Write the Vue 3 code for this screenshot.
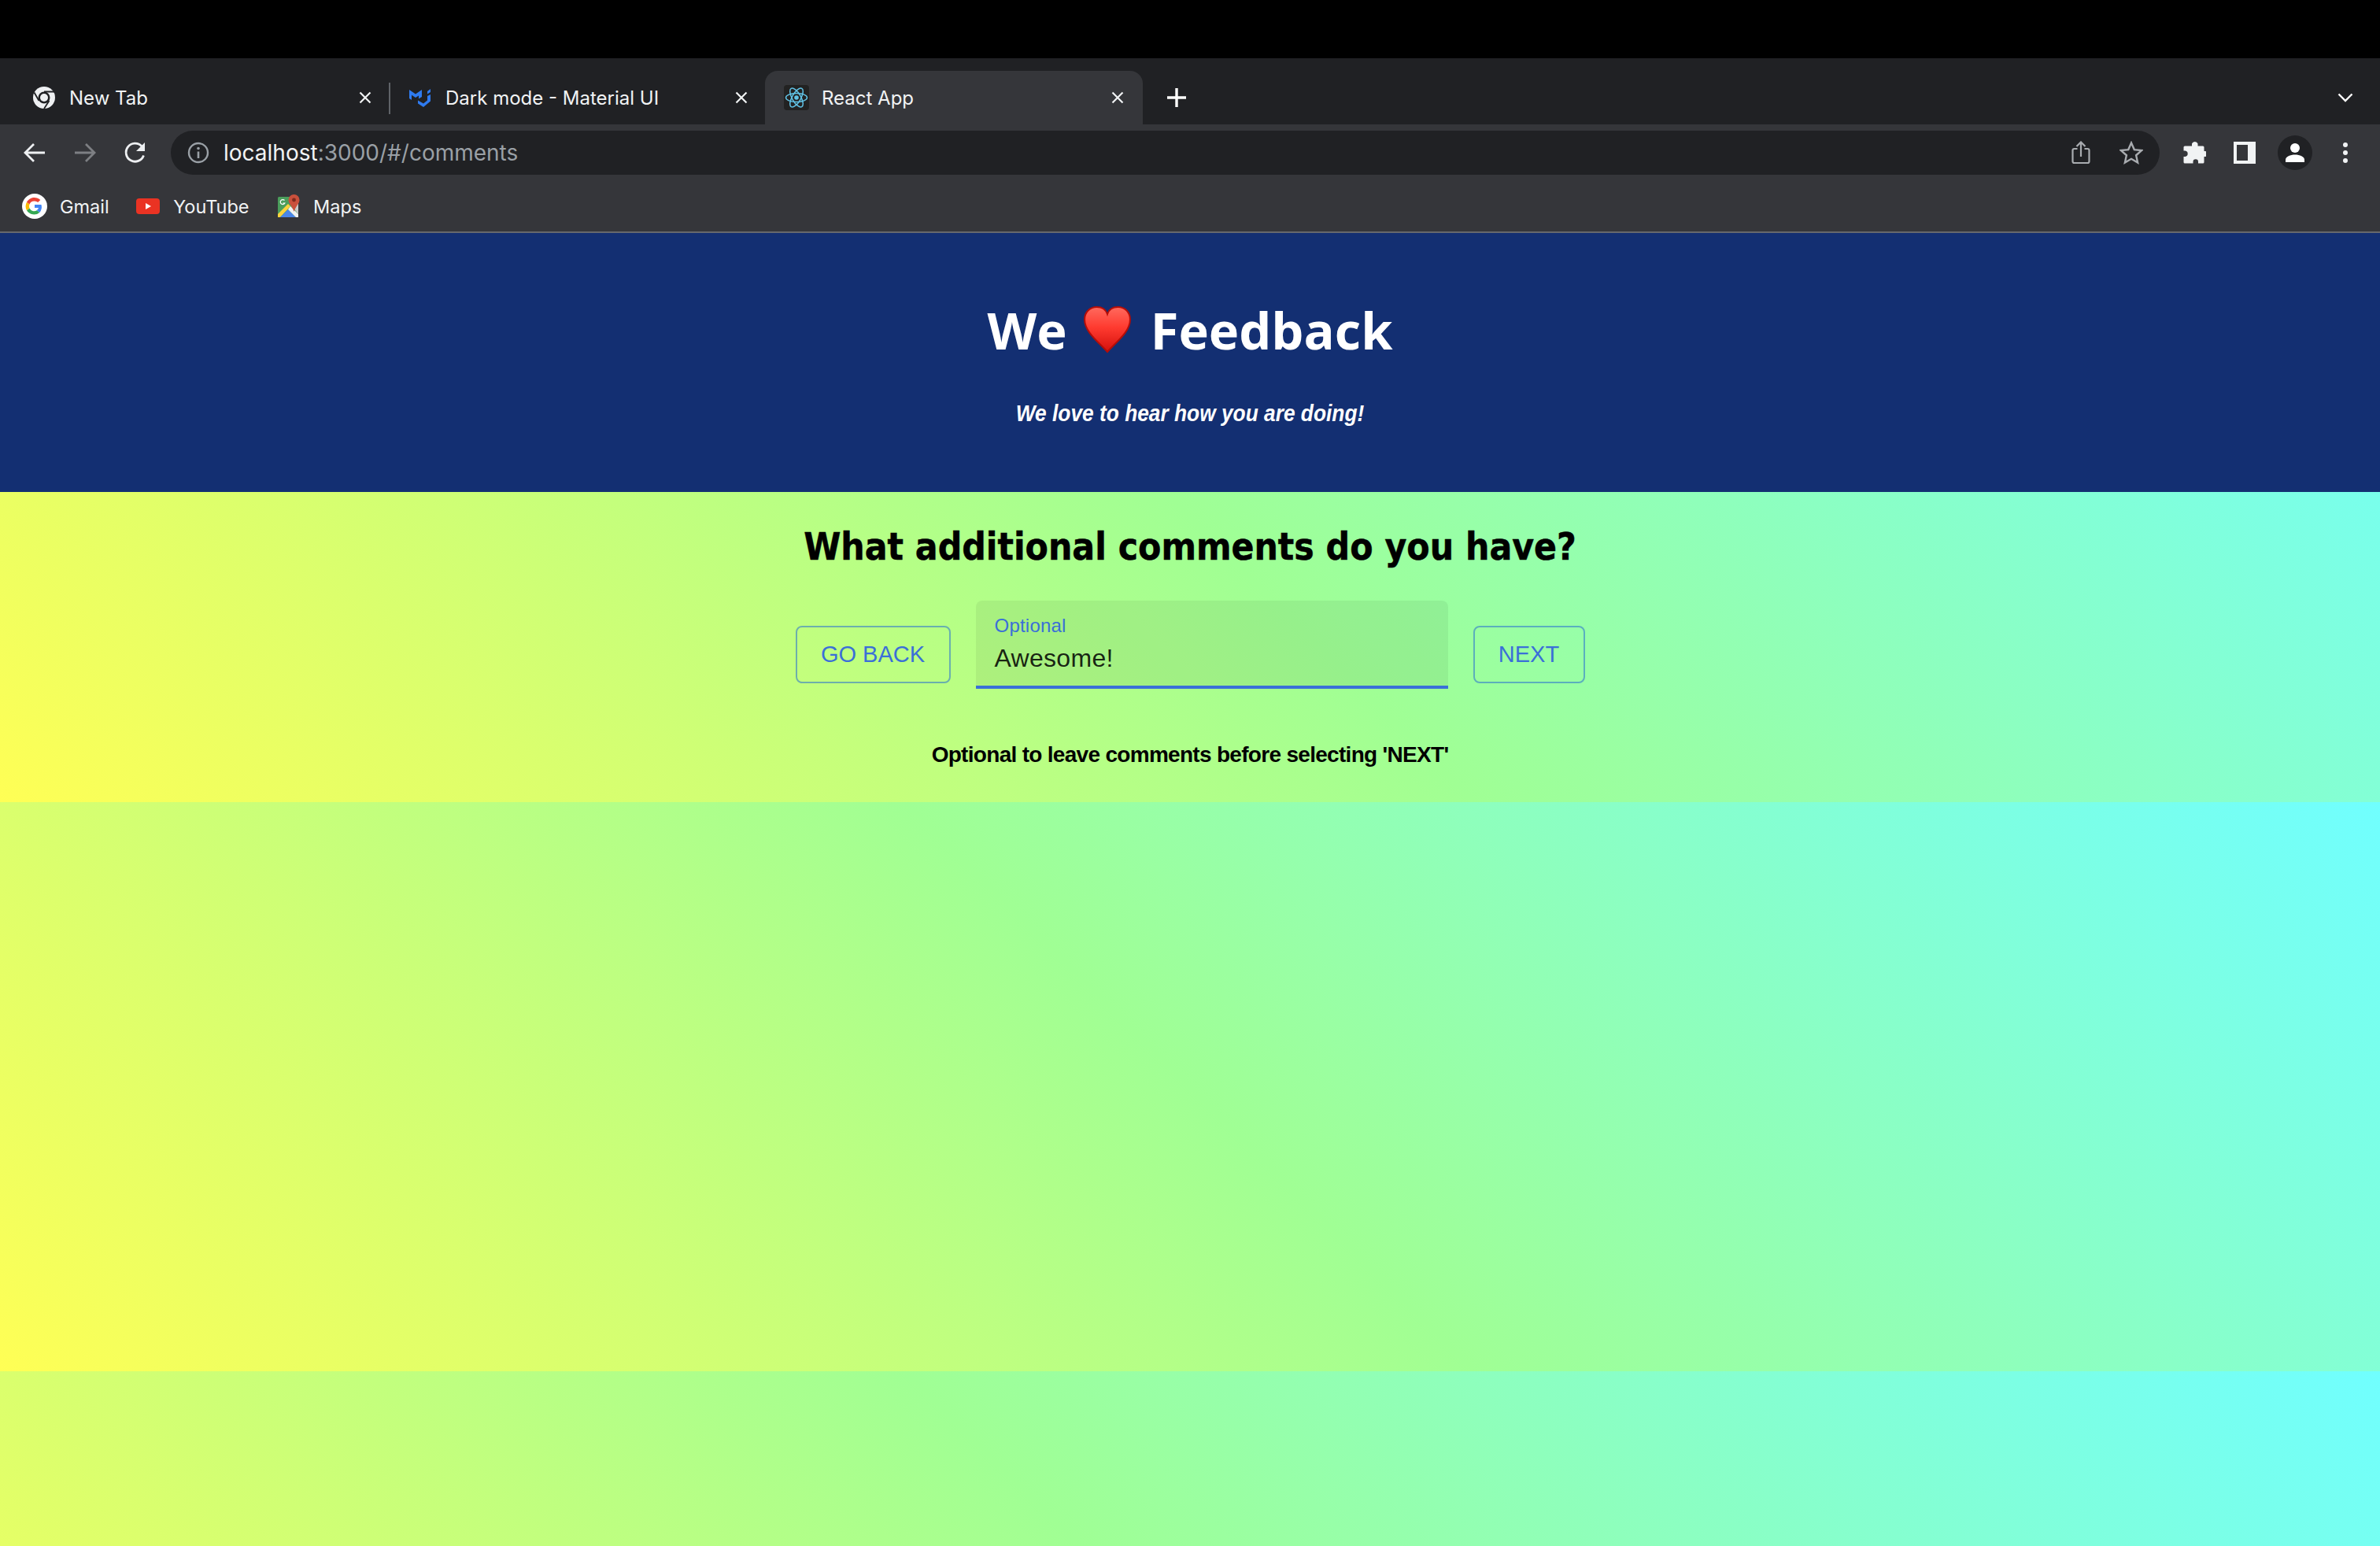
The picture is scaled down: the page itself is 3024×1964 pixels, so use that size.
<script setup>
const tabs = [
  { title: 'New Tab', icon: 'chrome' },
  { title: 'Dark mode - Material UI', icon: 'mui' },
  { title: 'React App', icon: 'react', active: true }
]
const bookmarks = [
  { title: 'Gmail', icon: 'google' },
  { title: 'YouTube', icon: 'youtube' },
  { title: 'Maps', icon: 'maps' }
]
</script>

<template>
  <div class="screen">
    <div class="topbar"></div>

    <div class="tabstrip">
      <div v-for="tab in tabs" :key="tab.title" class="tab" :class="{ active: tab.active }">
        <svg v-if="tab.icon === 'chrome'" class="favicon" viewBox="0 0 32 32">
          <circle cx="16" cy="16" r="14" fill="#eef0f2" />
          <circle cx="16" cy="16" r="7.500" fill="#202124" />
          <circle cx="16" cy="16" r="5" fill="#eef0f2" />
          <path d="M16 8.500H29M9.500 20 3.500 9.500M22.500 20 16 30" stroke="#202124" stroke-width="1.800" fill="none" />
        </svg>
        <svg v-else-if="tab.icon === 'mui'" class="favicon" viewBox="0 0 32 32">
          <path d="M2 6l8 5.500 8-5.500v9l-4 2.500v-4l-4 2.500-5-3.300v6.300L2 17z" fill="#2f7bf0" />
          <path d="M29 12v8.500L20 28l-7-4.500v-4l7 4 5-4v-5.500z" fill="#2f7bf0" />
          <path d="M25 8l4-3v4l-4 2.500z" fill="#2f7bf0" />
        </svg>
        <svg v-else class="favicon" viewBox="0 0 32 32">
          <rect width="32" height="32" rx="4" fill="#222" />
          <g fill="none" stroke="#61c3e6" stroke-width="1.500">
            <ellipse cx="16" cy="16" rx="13.500" ry="5.500" />
            <ellipse cx="16" cy="16" rx="13.500" ry="5.500" transform="rotate(60 16 16)" />
            <ellipse cx="16" cy="16" rx="13.500" ry="5.500" transform="rotate(120 16 16)" />
          </g>
          <circle cx="16" cy="16" r="2.800" fill="#61c3e6" />
        </svg>
        <span class="tab-title">{{ tab.title }}</span>
        <svg class="tab-close" viewBox="0 0 16 16">
          <path d="M1.500 1.500l13 13M14.500 1.500l-13 13" stroke="#f1f3f4" stroke-width="2.200" fill="none" />
        </svg>
      </div>
      <svg class="new-tab" viewBox="0 0 24 24">
        <path d="M12 0v24M0 12h24" stroke="#fff" stroke-width="3.400" fill="none" />
      </svg>
      <svg class="tab-list" viewBox="0 0 20 12">
        <path d="M1.500 1.500 10 10l8.500-8.500" stroke="#fff" stroke-width="2.400" fill="none" />
      </svg>
    </div>

    <div class="toolbar">
      <div class="nav-row">
        <svg class="nav-icon" viewBox="0 0 32 32">
          <path d="M29 16H5M15 5 4 16l11 11" stroke="#eef0f2" stroke-width="2.800" fill="none" />
        </svg>
        <svg class="nav-icon" viewBox="0 0 32 32">
          <path d="M3 16h24M17 5l11 11-11 11" stroke="#7d7f83" stroke-width="2.800" fill="none" />
        </svg>
        <svg class="nav-icon" viewBox="0 0 32 32">
          <path d="M26.500 19.500A11.500 11.500 0 1 1 24 7.800" stroke="#eef0f2" stroke-width="2.800" fill="none" />
          <path d="M28 3v11H17z" fill="#eef0f2" />
        </svg>

        <div class="urlbar">
          <svg class="info-icon" viewBox="0 0 28 28">
            <circle cx="14" cy="14" r="12" stroke="#9aa0a6" stroke-width="2.400" fill="none" />
            <path d="M14 12.500V21" stroke="#9aa0a6" stroke-width="2.600" />
            <circle cx="14" cy="8.500" r="1.800" fill="#9aa0a6" />
          </svg>
          <span class="url"><span class="url-host">localhost</span>:3000/#/comments</span>
          <svg class="share-icon" viewBox="0 0 24 30">
            <path d="M7.500 10H3.500a2 2 0 0 0-2 2v14a2 2 0 0 0 2 2h17a2 2 0 0 0 2-2V12a2 2 0 0 0-2-2h-4M12 20V2M6.500 7 12 1.500 17.500 7" stroke="#a9acb0" stroke-width="2.200" fill="none" />
          </svg>
          <svg class="star-icon" viewBox="0 0 30 30">
            <path d="M15 2.500l3.800 8.600 9.300 1-7 6.200 2 9.200-8.100-4.700-8.100 4.700 2-9.200-7-6.200 9.300-1z" stroke="#a9acb0" stroke-width="2.400" fill="none" />
          </svg>
        </div>

        <svg class="puzzle-icon" viewBox="0 0 30 30">
          <path d="M12 3.500a4 4 0 0 1 7.500 0V6.500H26a1.500 1.500 0 0 1 1.500 1.500v5h1a3.500 3.500 0 0 1 0 7h-1v7a1.500 1.500 0 0 1-1.500 1.500h-6v-2a3.200 3.200 0 0 0-6.500 0v2H3a1.500 1.500 0 0 1-1.500-1.500V20h2a3.800 3.800 0 0 0 0-7.500h-2V8A1.500 1.500 0 0 1 3 6.500h9z" fill="#f1f3f4" />
        </svg>
        <div class="panel-icon"></div>
        <div class="avatar">
          <svg viewBox="0 0 26 26">
            <circle cx="13" cy="7" r="6" fill="#fff" />
            <path d="M1 25v-3c0-4 6-6.500 12-6.500S25 18 25 22v3z" fill="#fff" />
          </svg>
        </div>
        <div class="dots"><i></i><i></i><i></i></div>
      </div>

      <div class="bookmarks">
        <div v-for="mark in bookmarks" :key="mark.title" class="bookmark">
          <svg v-if="mark.icon === 'google'" class="mark-icon" viewBox="0 0 32 32">
            <circle cx="16" cy="16" r="16" fill="#fff" />
            <path d="M24.500 14H16v4h5a5.500 5.500 0 0 1-2.300 3.200l3.600 2.800A11 11 0 0 0 24.500 14z" fill="#4285f4" />
            <path d="M9.500 18.500 6 21.300A11 11 0 0 0 22.300 24l-3.600-2.800a6.500 6.500 0 0 1-9.200-2.700z" fill="#34a853" />
            <path d="M9.500 13.500 6 10.700a11 11 0 0 0 0 10.600l3.500-2.800a6.500 6.500 0 0 1 0-5z" fill="#fbbc05" />
            <path d="M16 9.500a6 6 0 0 1 4.200 1.600l3.100-3.100A11 11 0 0 0 6 10.700l3.500 2.800A6.500 6.500 0 0 1 16 9.500z" fill="#ea4335" />
          </svg>
          <svg v-else-if="mark.icon === 'youtube'" class="mark-icon" viewBox="0 0 32 32">
            <rect x="1" y="6" width="30" height="20" rx="4" fill="#ea3323" />
            <path d="M13 12l7 4-7 4z" fill="#fff" />
          </svg>
          <svg v-else class="mark-icon" viewBox="0 0 32 32">
            <rect x="3" y="4" width="26" height="26" rx="1.500" fill="#4a9d5b" />
            <path d="M3 26 16 13l3 3L6 30H3z" fill="#fbd33c" />
            <path d="M6 30l10-10 10 10z" fill="#4a86e8" />
            <path d="M19 16l10 10v4h-3L16 20z" fill="#f2f2f2" />
            <path d="M19 13l10-2v15z" fill="#c9c9c9" />
            <path d="M23.500 1a7 7 0 0 1 7 7c0 5-5 8-7 15-2-7-7-10-7-15a7 7 0 0 1 7-7z" fill="#c9503c" />
            <circle cx="23.500" cy="8" r="2.400" fill="#7e2a1e" />
            <path d="M11.500 8.500a3 3 0 1 0 .4 3.500h-2.400" stroke="#fff" stroke-width="1.200" fill="none" />
          </svg>
          <span>{{ mark.title }}</span>
        </div>
      </div>
    </div>

    <div class="app">
      <header class="hero">
        <h1 class="hero-title">
          <span>We</span>
          <svg class="heart" viewBox="0 0 60 60" preserveAspectRatio="none">
            <defs>
              <linearGradient id="heartFill" x1="0" y1="0" x2="0" y2="1">
                <stop offset="0" stop-color="#ff6a5e" />
                <stop offset="0.45" stop-color="#ff3b30" />
                <stop offset="1" stop-color="#d4100c" />
              </linearGradient>
            </defs>
            <path d="M30 58C20 46 2 33 2 17 2 7 9 1 17 1c6 0 11 3 13 9 2-6 7-9 13-9 8 0 15 6 15 16 0 16-18 29-28 41z" fill="url(#heartFill)" stroke="#b50d08" stroke-width="2" />
          </svg>
          <span>Feedback</span>
        </h1>
        <p class="hero-sub">We love to hear how you are doing!</p>
      </header>

      <section class="panel">
        <h2 class="question">What additional comments do you have?</h2>
        <div class="form-row">
          <button class="btn btn-back">GO BACK</button>
          <div class="field">
            <label class="field-label">Optional</label>
            <div class="field-value">Awesome!</div>
          </div>
          <button class="btn btn-next">NEXT</button>
        </div>
        <p class="hint">Optional to leave comments before selecting 'NEXT'</p>
      </section>
    </div>
  </div>
</template>

<style>
html, body {
  margin: 0;
  background: #000;
}
</style>

<style scoped>
.screen {
  width: 3024px;
  height: 1964px;
  display: flex;
  flex-direction: column;
  overflow: hidden;
  font-family: Inter, "Liberation Sans", sans-serif;
}
.topbar {
  height: 74px;
  flex: none;
  background: #000;
}
.tabstrip {
  height: 84px;
  flex: none;
  background: #202124;
  display: flex;
  align-items: flex-end;
  padding-left: 16px;
  position: relative;
}
.tab {
  width: 480px;
  height: 68px;
  margin-right: -2px;
  box-sizing: border-box;
  padding: 0 24px;
  display: flex;
  align-items: center;
  color: #f1f3f4;
  font-size: 24px;
  position: relative;
}
.tab:first-child::after {
  content: "";
  position: absolute;
  right: 0;
  top: 15px;
  width: 2px;
  height: 40px;
  background: #5f6368;
}
.tab.active {
  margin-right: 0;
  background: #35363a;
  border-radius: 16px 16px 0 0;
}
.favicon {
  width: 32px;
  height: 32px;
  flex: none;
  margin-right: 16px;
}
.tab-title {
  flex: 1;
  white-space: nowrap;
}
.tab-close {
  width: 16px;
  height: 16px;
  flex: none;
}
.new-tab {
  width: 24px;
  height: 24px;
  margin: 0 0 22px 31px;
}
.tab-list {
  position: absolute;
  right: 34px;
  top: 44px;
  width: 20px;
  height: 12px;
}
.toolbar {
  height: 138px;
  flex: none;
  box-sizing: border-box;
  background: #35363a;
  border-bottom: 2px solid #66686c;
  padding-top: 8px;
}
.nav-row {
  height: 56px;
  display: flex;
  align-items: center;
  padding-left: 28px;
}
.nav-icon {
  width: 32px;
  height: 32px;
  flex: none;
  margin-right: 32px;
}
.urlbar {
  width: 2527px;
  height: 56px;
  flex: none;
  margin-left: -3px;
  box-sizing: border-box;
  background: #202124;
  border-radius: 28px;
  display: flex;
  align-items: center;
  padding-left: 21px;
  padding-right: 21px;
}
.info-icon {
  width: 28px;
  height: 28px;
  flex: none;
  margin-right: 18px;
}
.url {
  flex: 1;
  font-size: 28px;
  color: #9aa0a6;
  white-space: nowrap;
}
.url-host {
  color: #f1f3f4;
}
.share-icon {
  width: 24px;
  height: 30px;
  flex: none;
  margin-right: 37px;
}
.star-icon {
  width: 30px;
  height: 30px;
  flex: none;
}
.puzzle-icon {
  width: 30px;
  height: 30px;
  flex: none;
  margin-left: 29px;
}
.panel-icon {
  width: 28px;
  height: 28px;
  flex: none;
  margin-left: 35px;
  box-sizing: border-box;
  border: 4px solid #f1f3f4;
  border-right-width: 10px;
}
.avatar {
  width: 44px;
  height: 44px;
  flex: none;
  margin-left: 28px;
  border-radius: 50%;
  background: #202124;
  display: flex;
  align-items: center;
  justify-content: center;
}
.avatar svg {
  width: 26px;
  height: 26px;
}
.dots {
  width: 6px;
  flex: none;
  margin-left: 39px;
  display: flex;
  flex-direction: column;
  gap: 4px;
}
.dots i {
  width: 6px;
  height: 6px;
  border-radius: 50%;
  background: #f1f3f4;
}
.bookmarks {
  height: 72px;
  box-sizing: border-box;
  padding: 8px 0 0 28px;
  display: flex;
  align-items: center;
}
.bookmark {
  display: flex;
  align-items: center;
  gap: 16px;
  color: #f1f3f4;
  font-size: 23.500px;
  margin-right: 33.500px;
}
.mark-icon {
  width: 32px;
  height: 32px;
  flex: none;
}
.app {
  flex: 1;
  background-image: linear-gradient(45deg, #ffff55 0%, #a0ff94 50%, #70ffff 100%);
  background-size: 100% 723px;
  background-repeat: repeat;
}
.hero {
  height: 329px;
  box-sizing: border-box;
  background: #132f72;
  color: #fff;
  text-align: center;
  padding-top: 83px;
}
.hero-title {
  margin: 0;
  font-family: "Open Sans", sans-serif;
  font-weight: 700;
  font-size: 65px;
  line-height: 80px;
  display: flex;
  justify-content: center;
  align-items: center;
  gap: 22px;
}
.heart {
  width: 62px;
  height: 60px;
  margin: 0 2px 0 -2px;
}
.hero-sub {
  margin: 46px 0 0;
  font-family: "Liberation Sans", Arial, sans-serif;
  font-style: italic;
  font-weight: 700;
  font-size: 30px;
  line-height: 40px;
  transform: scaleX(0.877);
}
.panel {
  height: 393px;
  box-sizing: border-box;
  padding-top: 37px;
  text-align: center;
  color: #000;
}
.question {
  margin: 0;
  font-family: "DejaVu Sans", Verdana, sans-serif;
  font-stretch: condensed;
  font-weight: 700;
  font-size: 47.500px;
  line-height: 66px;
  -webkit-text-stroke: 0.5px #000;
}
.form-row {
  margin-top: 35px;
  display: flex;
  justify-content: center;
  align-items: flex-end;
  gap: 32px;
}
.btn {
  height: 73px;
  margin-bottom: 7px;
  box-sizing: border-box;
  padding: 0;
  background: transparent;
  border: 2px solid rgba(40, 110, 210, 0.55);
  border-radius: 8px;
  font-family: "Liberation Sans", Arial, sans-serif;
  font-size: 29px;
  color: #3a6fd8;
}
.btn-back {
  width: 197px;
}
.btn-next {
  width: 142px;
}
.field {
  width: 600px;
  height: 112px;
  box-sizing: border-box;
  padding: 17px 24px 0;
  background: rgba(0, 0, 0, 0.06);
  border-radius: 8px 8px 0 0;
  border-bottom: 4px solid #3a6fd8;
  text-align: left;
  font-family: "Liberation Sans", Arial, sans-serif;
}
.field-label {
  display: block;
  font-size: 24px;
  line-height: 30px;
  letter-spacing: 0.22px;
  color: #3a6fd8;
}
.field-value {
  margin-top: 3px;
  font-size: 32px;
  line-height: 46px;
  letter-spacing: 0.3px;
  color: rgba(0, 0, 0, 0.87);
}
.hint {
  margin: 66px 0 0;
  font-family: "Liberation Sans", Arial, sans-serif;
  font-weight: 700;
  font-size: 28px;
  line-height: 36px;
  letter-spacing: -0.7px;
}
</style>
